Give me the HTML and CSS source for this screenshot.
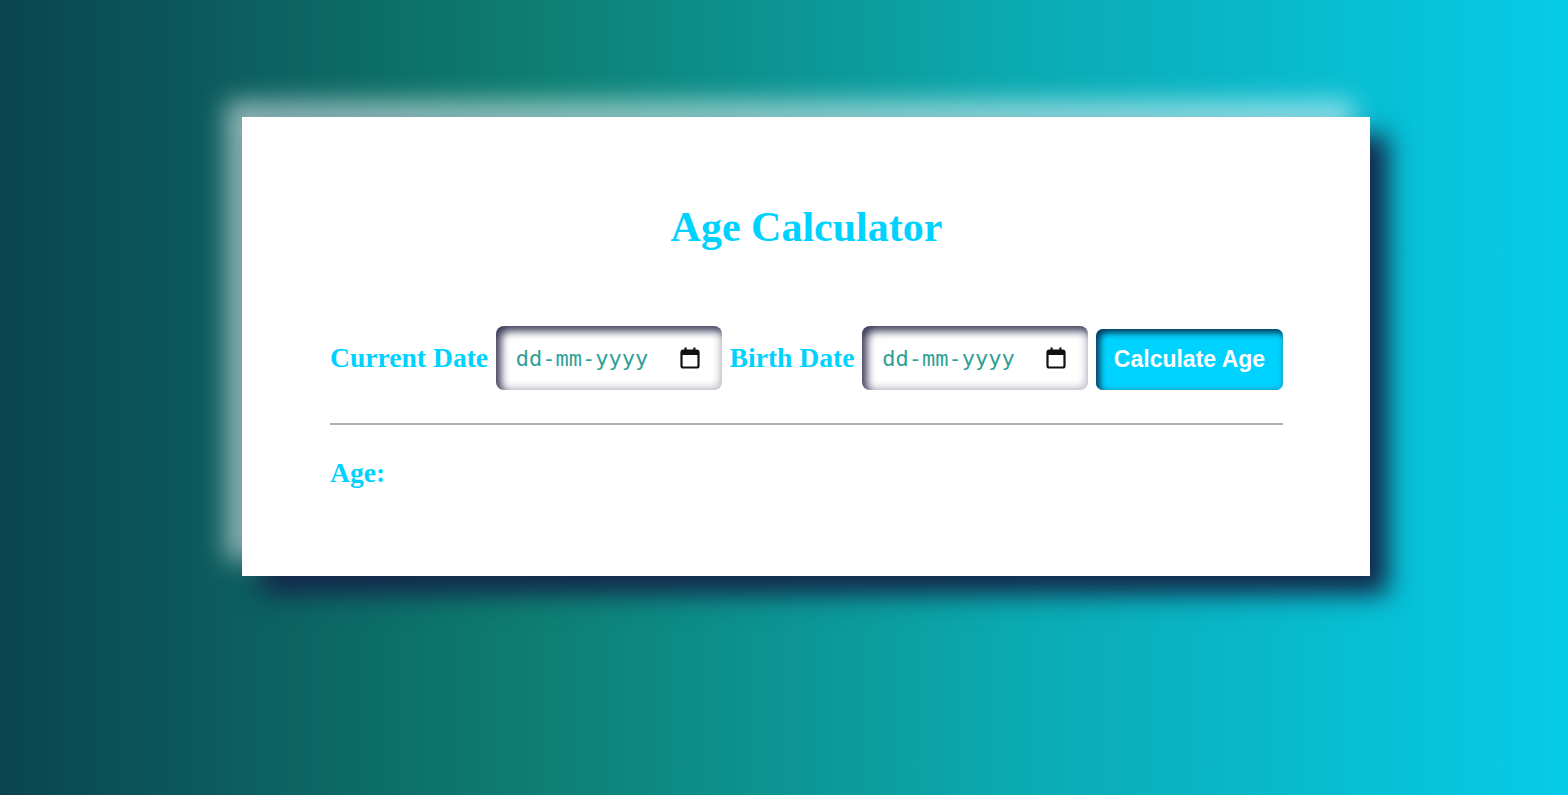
FILE: index.html
```html
<!DOCTYPE html>
<html lang="en">
<head>
<meta charset="utf-8">
<title>Age Calculator</title>
<link rel="stylesheet" href="styles.css">
</head>
<body>
<main class="page">
  <section class="card">
    <h1 class="title">Age Calculator</h1>
    <div class="row">
      <label class="label">Current Date</label>
      <div class="date-field">
        <span class="date-text">dd-mm-yyyy</span>
        <svg class="cal" width="20" height="22" viewBox="0 0 20 22" aria-hidden="true">
          <rect x="1.5" y="3.5" width="17" height="17" rx="1.8" fill="none" stroke="#111" stroke-width="2.2"/>
          <rect x="1.5" y="3.5" width="17" height="4.5" fill="#111"/>
          <rect x="4.5" y="0.5" width="2.2" height="4.5" fill="#111"/>
          <rect x="13.3" y="0.5" width="2.2" height="4.5" fill="#111"/>
        </svg>
      </div>
      <label class="label">Birth Date</label>
      <div class="date-field">
        <span class="date-text">dd-mm-yyyy</span>
        <svg class="cal" width="20" height="22" viewBox="0 0 20 22" aria-hidden="true">
          <rect x="1.5" y="3.5" width="17" height="17" rx="1.8" fill="none" stroke="#111" stroke-width="2.2"/>
          <rect x="1.5" y="3.5" width="17" height="4.5" fill="#111"/>
          <rect x="4.5" y="0.5" width="2.2" height="4.5" fill="#111"/>
          <rect x="13.3" y="0.5" width="2.2" height="4.5" fill="#111"/>
        </svg>
      </div>
      <button class="btn" type="button">Calculate Age</button>
    </div>
    <hr class="divider">
    <p class="result">Age:</p>
  </section>
</main>
</body>
</html>
```
FILE: styles.css
```css
html, body {
  margin: 0;
  height: 100%;
}
body {
  background: linear-gradient(to right, #0a4450 0%, #0e7e72 34%, #0ba9b0 64%, #06cbe8 100%);
  font-family: "Liberation Serif", "Times New Roman", serif;
  overflow: hidden;
}
.page {
  padding-top: 117px;
  padding-left: 242px;
}
.card {
  width: 953px;
  background: #fff;
  padding: 87px 87px 87px 88px;
  box-shadow: 18px 18px 24px #13284a, -16px -16px 24px rgba(255, 255, 255, 0.55);
}
.title {
  margin: 0;
  text-align: center;
  color: #00d2ff;
  font-size: 42px;
  line-height: 46px;
  font-weight: bold;
}
.row {
  margin-top: 76px;
  display: flex;
  align-items: flex-end;
  justify-content: space-between;
}
.label {
  align-self: center;
  color: #00d2ff;
  font-weight: bold;
  font-size: 27.6px;
  line-height: 32px;
}
.date-field {
  width: 226px;
  height: 64px;
  box-sizing: border-box;
  border-radius: 8px;
  background: #fff;
  box-shadow: inset 5px 5px 8px #3a3a58, inset -4px -4px 6px #d8d8e0;
  display: flex;
  align-items: center;
  justify-content: space-between;
  padding: 0 22px 0 20px;
}
.date-text {
  font-family: "DejaVu Sans Mono", monospace;
  font-size: 22px;
  color: #2f9f98;
}
.cal {
  display: block;
}
.btn {
  width: 187px;
  height: 61px;
  border: none;
  border-radius: 7px;
  background: #00d2ff;
  color: #fff;
  font-family: "Liberation Sans", Arial, sans-serif;
  font-weight: bold;
  font-size: 23px;
  padding: 0;
  box-shadow: inset 4px 4px 6px #0a3a5a, inset -2px -2px 4px #1ab8dd;
}
.divider {
  margin: 33px 0 0;
  border: none;
  height: 2px;
  background: #b0b0b0;
}
.result {
  margin: 32px 0 0;
  color: #00d2ff;
  font-weight: bold;
  font-size: 27.6px;
  line-height: 32px;
}
```
